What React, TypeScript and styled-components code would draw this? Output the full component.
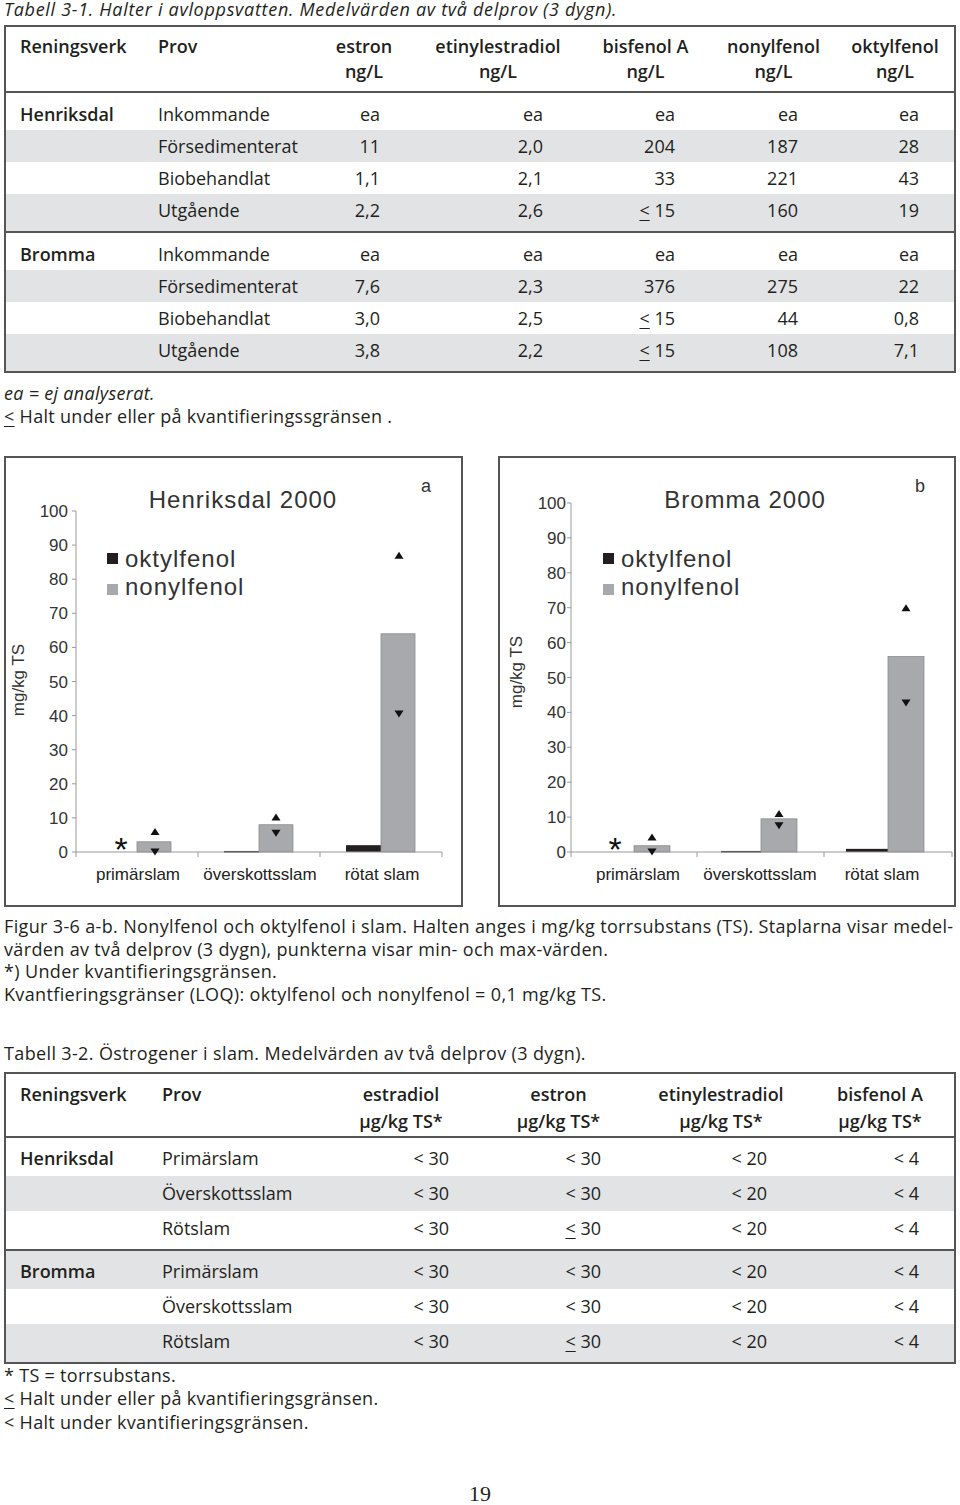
import React from 'react';
import styled, { createGlobalStyle } from 'styled-components';

const GlobalStyle = createGlobalStyle`
  html, body { margin: 0; padding: 0; background: #fff; }
  body { font-family: "Open Sans", "Noto Sans", sans-serif; color: #231f20; }
`;

const Page = styled.div`
  width: 952px;
  padding: 0 4px;
  font-size: 18px;
`;

const Caption = styled.div<{ $italic?: boolean; $mt: number; $lh?: number; $ls?: number }>`
  margin-top: ${p => p.$mt}px;
  font-style: ${p => (p.$italic ? 'italic' : 'normal')};
  line-height: ${p => p.$lh ?? 23}px;
  letter-spacing: ${p => p.$ls ?? 0.3}px;
  white-space: nowrap;
`;

const Le = styled.span`
  text-decoration: underline;
  text-underline-offset: 3px;
  text-decoration-thickness: 1px;
`;

const TableBox = styled.div<{ $mt: number }>`
  margin-top: ${p => p.$mt}px;
  border: 2px solid #555;
  box-sizing: border-box;
  width: 952px;
`;

const HeadRow = styled.div<{ $cols: string; $lh: number; $pt: number; $pb: number }>`
  display: grid;
  grid-template-columns: ${p => p.$cols};
  padding-top: ${p => p.$pt}px;
  padding-bottom: ${p => p.$pb}px;
  border-bottom: 2px solid #555;
  font-weight: 600;
  line-height: ${p => p.$lh}px;
`;

const HeadCell = styled.div<{ $center?: boolean; $pl?: number }>`
  text-align: ${p => (p.$center ? 'center' : 'left')};
  padding-left: ${p => p.$pl ?? 0}px;
  white-space: nowrap;
`;

const Group = styled.div<{ $sep?: boolean }>`
  border-top: ${p => (p.$sep ? '2px solid #555' : 'none')};
`;

const BodyRow = styled.div<{ $cols: string; $shade: boolean; $pt: number; $pb: number; $lh: number }>`
  display: grid;
  grid-template-columns: ${p => p.$cols};
  background: ${p => (p.$shade ? '#e2e3e5' : 'transparent')};
  padding-top: ${p => p.$pt}px;
  padding-bottom: ${p => p.$pb}px;
  line-height: ${p => p.$lh}px;
`;

const NameCell = styled.div<{ $bold?: boolean; $pl?: number }>`
  font-weight: ${p => (p.$bold ? 600 : 400)};
  padding-left: ${p => p.$pl ?? 0}px;
  white-space: nowrap;
`;

const NumCell = styled.div<{ $pr: number }>`
  text-align: right;
  padding-right: ${p => p.$pr}px;
  white-space: nowrap;
`;

const Figure = styled.div`
  margin-top: 28px;
  display: flex;
  gap: 35px;
`;

const Panel = styled.div<{ $w: number }>`
  width: ${p => p.$w}px;
  height: 451px;
  border: 2px solid #555;
  box-sizing: border-box;
  svg { display: block; }
`;

const PageNo = styled.div`
  margin-top: 47px;
  text-align: center;
  font-family: "Liberation Serif", "Times New Roman", serif;
  font-size: 22px;
  line-height: 26px;
`;

function Val({ v }: { v: string }) {
  if (v.startsWith('≤')) {
    return (
      <>
        <Le>&lt;</Le>
        {v.slice(1)}
      </>
    );
  }
  return <>{v}</>;
}

type ColSpec = { w: number; pr: number; hpl?: number };

type TableSpec = {
  mt: number;
  nameCols: number[];
  cols: ColSpec[];
  headers: string[][];
  head: { lh: number; pt: number; pb: number };
  body: { lh: number; edge: number };
  groups: { name: string; rows: { prov: string; vals: string[]; shade: boolean }[] }[];
};

function DataTable({ t }: { t: TableSpec }) {
  const cols = [...t.nameCols, ...t.cols.map(c => c.w)].map(n => `${n}px`).join(' ');
  return (
    <TableBox $mt={t.mt}>
      <HeadRow $cols={cols} $lh={t.head.lh} $pt={t.head.pt} $pb={t.head.pb}>
        <HeadCell $pl={14}>Reningsverk</HeadCell>
        <HeadCell>Prov</HeadCell>
        {t.headers.map((h, i) => (
          <HeadCell key={i} $center $pl={t.cols[i].hpl}>
            {h[0]}
            <br />
            {h[1]}
          </HeadCell>
        ))}
      </HeadRow>
      {t.groups.map((g, gi) => (
        <Group key={g.name} $sep={gi > 0}>
          {g.rows.map((r, ri) => (
            <BodyRow
              key={r.prov}
              $cols={cols}
              $shade={r.shade}
              $lh={t.body.lh}
              $pt={ri === 0 ? t.body.edge : 0}
              $pb={ri === g.rows.length - 1 ? t.body.edge : 0}
            >
              <NameCell $bold $pl={14}>{ri === 0 ? g.name : ''}</NameCell>
              <NameCell>{r.prov}</NameCell>
              {r.vals.map((v, vi) => (
                <NumCell key={vi} $pr={t.cols[vi].pr}>
                  <Val v={v} />
                </NumCell>
              ))}
            </BodyRow>
          ))}
        </Group>
      ))}
    </TableBox>
  );
}

const table1: TableSpec = {
  mt: 4,
  nameCols: [152, 162],
  cols: [
    { w: 88, pr: 28 },
    { w: 180, pr: 45 },
    { w: 115, pr: 28 },
    { w: 141, pr: 46 },
    { w: 102, pr: 27 },
  ],
  headers: [
    ['estron', 'ng/L'],
    ['etinylestradiol', 'ng/L'],
    ['bisfenol A', 'ng/L'],
    ['nonylfenol', 'ng/L'],
    ['oktylfenol', 'ng/L'],
  ],
  head: { lh: 25, pt: 7, pb: 7 },
  body: { lh: 32, edge: 5 },
  groups: [
    {
      name: 'Henriksdal',
      rows: [
        { prov: 'Inkommande', vals: ['ea', 'ea', 'ea', 'ea', 'ea'], shade: false },
        { prov: 'Försedimenterat', vals: ['11', '2,0', '204', '187', '28'], shade: true },
        { prov: 'Biobehandlat', vals: ['1,1', '2,1', '33', '221', '43'], shade: false },
        { prov: 'Utgående', vals: ['2,2', '2,6', '≤ 15', '160', '19'], shade: true },
      ],
    },
    {
      name: 'Bromma',
      rows: [
        { prov: 'Inkommande', vals: ['ea', 'ea', 'ea', 'ea', 'ea'], shade: false },
        { prov: 'Försedimenterat', vals: ['7,6', '2,3', '376', '275', '22'], shade: true },
        { prov: 'Biobehandlat', vals: ['3,0', '2,5', '≤ 15', '44', '0,8'], shade: false },
        { prov: 'Utgående', vals: ['3,8', '2,2', '≤ 15', '108', '7,1'], shade: true },
      ],
    },
  ],
};

const ts = 'µg/kg TS*';
const table2: TableSpec = {
  mt: 7,
  nameCols: [156, 168],
  cols: [
    { w: 142, pr: 23 },
    { w: 173, pr: 44 },
    { w: 152, pr: 30 },
    { w: 157, pr: 35, hpl: 9 },
  ],
  headers: [
    ['estradiol', ts],
    ['estron', ts],
    ['etinylestradiol', ts],
    ['bisfenol A', ts],
  ],
  head: { lh: 27, pt: 7, pb: 1 },
  body: { lh: 35, edge: 3 },
  groups: [
    {
      name: 'Henriksdal',
      rows: [
        { prov: 'Primärslam', vals: ['< 30', '< 30', '< 20', '< 4'], shade: false },
        { prov: 'Överskottsslam', vals: ['< 30', '< 30', '< 20', '< 4'], shade: true },
        { prov: 'Rötslam', vals: ['< 30', '≤ 30', '< 20', '< 4'], shade: false },
      ],
    },
    {
      name: 'Bromma',
      rows: [
        { prov: 'Primärslam', vals: ['< 30', '< 30', '< 20', '< 4'], shade: true },
        { prov: 'Överskottsslam', vals: ['< 30', '< 30', '< 20', '< 4'], shade: false },
        { prov: 'Rötslam', vals: ['< 30', '≤ 30', '< 20', '< 4'], shade: true },
      ],
    },
  ],
};

type Bar = { x1: number; x2: number; v: number; dark: boolean };
type Marker = { x: number; v: number; up: boolean };
type ChartCfg = {
  w: number;
  vb: string;
  axisX: number;
  right: number;
  y0: number;
  ppu: number;
  tickLabelX: number;
  cats: number[];
  title: string;
  titleX: number;
  letter: string;
  letterX: number;
  legendX: number;
  yLabel: { x: number; y: number };
  star: { x: number; y: number };
  labels: { t: string; x: number }[];
  bars: Bar[];
  markers: Marker[];
};

const FONT = '"Liberation Sans", Arial, sans-serif';
const INK = '#333';
const GRAYBAR = '#a7a9ac';
const DARKBAR = '#231f20';

function Chart({ c }: { c: ChartCfg }) {
  const Y = (v: number) => c.y0 - v * c.ppu;
  const ticks = [0, 10, 20, 30, 40, 50, 60, 70, 80, 90, 100];
  return (
    <Panel $w={c.w}>
      <svg width={c.w - 4} height={447} viewBox={c.vb} fontFamily={FONT}>
        <text x={c.titleX} y={508} fontSize={24} letterSpacing={1} textAnchor="middle" fill={INK}>
          {c.title}
        </text>
        <text x={c.letterX} y={492} fontSize={18} textAnchor="middle" fill={INK}>
          {c.letter}
        </text>
        <rect x={c.legendX} y={553} width={11} height={11} fill={DARKBAR} />
        <rect x={c.legendX} y={584} width={11} height={11} fill={GRAYBAR} />
        <text x={c.legendX + 18} y={567} fontSize={24} letterSpacing={1} fill={INK}>
          oktylfenol
        </text>
        <text x={c.legendX + 18} y={595} fontSize={24} letterSpacing={1} fill={INK}>
          nonylfenol
        </text>
        <text
          transform={`translate(${c.yLabel.x} ${c.yLabel.y}) rotate(-90)`}
          fontSize={17}
          textAnchor="middle"
          fill={INK}
        >
          mg/kg TS
        </text>
        <line x1={c.axisX} y1={Y(100)} x2={c.axisX} y2={c.y0} stroke="#999" strokeWidth={1} />
        {ticks.map(t => (
          <g key={t}>
            <line x1={c.axisX - 4} y1={Y(t)} x2={c.axisX} y2={Y(t)} stroke="#999" strokeWidth={1} />
            <text x={c.tickLabelX} y={Y(t) + 6} fontSize={17} textAnchor="end" fill={INK}>
              {t}
            </text>
          </g>
        ))}
        {c.bars.map((b, i) => (
          <rect
            key={i}
            x={b.x1}
            y={Y(b.v)}
            width={b.x2 - b.x1}
            height={Math.max(b.v * c.ppu, 1.5)}
            fill={b.dark ? DARKBAR : GRAYBAR}
            stroke={b.dark ? 'none' : '#8c8c8c'}
            strokeWidth={0.8}
          />
        ))}
        <line x1={c.axisX} y1={c.y0} x2={c.right} y2={c.y0} stroke="#999" strokeWidth={1} />
        {c.cats.map(x => (
          <line key={x} x1={x} y1={c.y0} x2={x} y2={c.y0 + 5} stroke="#999" strokeWidth={1} />
        ))}
        {c.markers.map((m, i) => {
          const y = Y(m.v);
          const pts = m.up
            ? `${m.x - 4.5},${y + 3.5} ${m.x + 4.5},${y + 3.5} ${m.x},${y - 3.5}`
            : `${m.x - 4.5},${y - 3.5} ${m.x + 4.5},${y - 3.5} ${m.x},${y + 3.5}`;
          return <polygon key={i} points={pts} fill="#111" />;
        })}
        <text x={c.star.x} y={c.star.y + 19} fontSize={34} textAnchor="middle" fill="#111">
          *
        </text>
        {c.labels.map(l => (
          <text key={l.t} x={l.x} y={880} fontSize={17} textAnchor="middle" fill="#222">
            {l.t}
          </text>
        ))}
      </svg>
    </Panel>
  );
}

const leftChart: ChartCfg = {
  w: 459,
  vb: '6 458 455 447',
  axisX: 76,
  right: 442,
  y0: 852,
  ppu: 3.41,
  tickLabelX: 68,
  cats: [76, 198, 320, 442],
  title: 'Henriksdal 2000',
  titleX: 243,
  letter: 'a',
  letterX: 426,
  legendX: 107,
  yLabel: { x: 24, y: 680 },
  star: { x: 121, y: 842 },
  labels: [
    { t: 'primärslam', x: 138 },
    { t: 'överskottsslam', x: 260 },
    { t: 'rötat slam', x: 382 },
  ],
  bars: [
    { x1: 137, x2: 171, v: 3, dark: false },
    { x1: 224, x2: 259, v: 0.3, dark: true },
    { x1: 259, x2: 293, v: 8, dark: false },
    { x1: 346, x2: 381, v: 2, dark: true },
    { x1: 381, x2: 415, v: 64, dark: false },
  ],
  markers: [
    { x: 155, v: 6, up: true },
    { x: 155, v: 0, up: false },
    { x: 276, v: 10.3, up: true },
    { x: 276, v: 5.5, up: false },
    { x: 399, v: 87, up: true },
    { x: 399, v: 40.5, up: false },
  ],
};

const rightChart: ChartCfg = {
  w: 458,
  vb: '500 458 454 447',
  axisX: 571,
  right: 952,
  y0: 852,
  ppu: 3.49,
  tickLabelX: 566,
  cats: [571, 697, 824, 952],
  title: 'Bromma 2000',
  titleX: 745,
  letter: 'b',
  letterX: 920,
  legendX: 603,
  yLabel: { x: 522, y: 672 },
  star: { x: 615, y: 842 },
  labels: [
    { t: 'primärslam', x: 638 },
    { t: 'överskottsslam', x: 760 },
    { t: 'rötat slam', x: 882 },
  ],
  bars: [
    { x1: 634, x2: 670, v: 1.8, dark: false },
    { x1: 721, x2: 761, v: 0.3, dark: true },
    { x1: 761, x2: 797, v: 9.5, dark: false },
    { x1: 846, x2: 888, v: 0.9, dark: true },
    { x1: 888, x2: 924, v: 56, dark: false },
  ],
  markers: [
    { x: 652, v: 4.3, up: true },
    { x: 652, v: 0, up: false },
    { x: 779, v: 11, up: true },
    { x: 779, v: 7.5, up: false },
    { x: 906, v: 70, up: true },
    { x: 906, v: 42.7, up: false },
  ],
};

export default function App() {
  return (
    <>
      <GlobalStyle />
      <Page>
        <Caption $italic $mt={-2} $ls={0.7}>
          Tabell 3-1. Halter i avloppsvatten. Medelvärden av två delprov (3 dygn).
        </Caption>
        <DataTable t={table1} />
        <Caption $italic $mt={9}>ea = ej analyserat.</Caption>
        <Caption $mt={0}>
          <Le>&lt;</Le> Halt under eller på kvantifieringssgränsen .
        </Caption>
        <Figure>
          <Chart c={leftChart} />
          <Chart c={rightChart} />
        </Figure>
        <Caption $mt={8} $lh={22.7} $ls={0.35}>
          Figur 3-6 a-b. Nonylfenol och oktylfenol i slam. Halten anges i mg/kg torrsubstans (TS). Staplarna visar medel-
        </Caption>
        <Caption $mt={0} $lh={22.7} $ls={0.35}>
          värden av två delprov (3 dygn), punkterna visar min- och max-värden.
        </Caption>
        <Caption $mt={0} $lh={22.7} $ls={0.35}>*) Under kvantifieringsgränsen.</Caption>
        <Caption $mt={0} $lh={22.7} $ls={0.35}>
          Kvantfieringsgränser (LOQ): oktylfenol och nonylfenol = 0,1 mg/kg TS.
        </Caption>
        <Caption $mt={36} $ls={0.36}>
          Tabell 3-2. Östrogener i slam. Medelvärden av två delprov (3 dygn).
        </Caption>
        <DataTable t={table2} />
        <Caption $mt={0} $lh={23.5}>* TS = torrsubstans.</Caption>
        <Caption $mt={0} $lh={23.5}>
          <Le>&lt;</Le> Halt under eller på kvantifieringsgränsen.
        </Caption>
        <Caption $mt={0} $lh={23.5}>&lt; Halt under kvantifieringsgränsen.</Caption>
        <PageNo>19</PageNo>
      </Page>
    </>
  );
}
